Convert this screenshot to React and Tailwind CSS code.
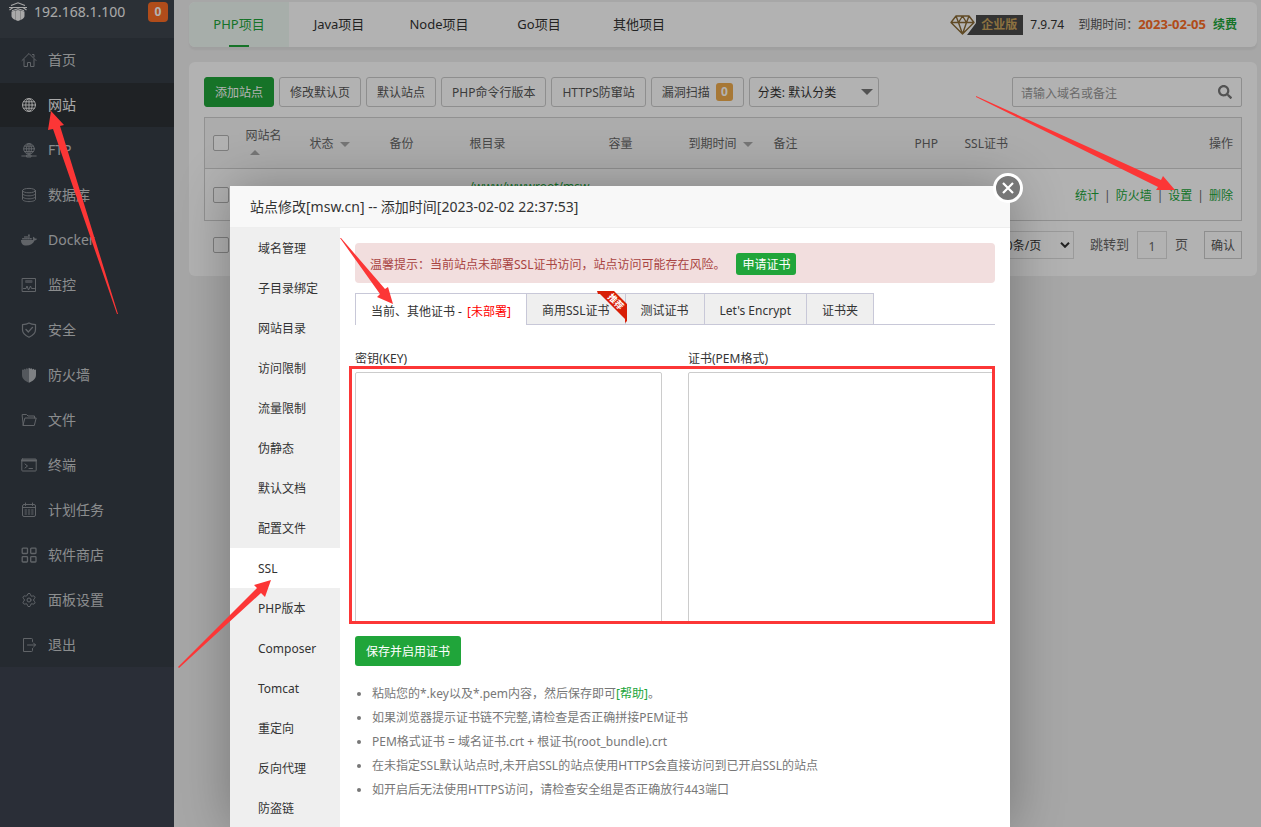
import React from "react";
import { FaDocker, FaSearch } from "react-icons/fa";
import { Settings } from "lucide-react";

const line = { fill: "none", stroke: "currentColor", strokeWidth: 1, strokeLinecap: "round", strokeLinejoin: "round" };

function Svg({ children, ...rest }) {
  return (
    <svg viewBox="0 0 16 16" className="size-4 shrink-0" aria-hidden="true" {...line} {...rest}>
      {children}
    </svg>
  );
}

const icons = {
  home: (
    <Svg>
      <path d="M1 8.5 8 1.5l7 7M3 7.5v7h3.5v-4h3v4H13v-7M11.5 2.5h1.5v2.5" />
    </Svg>
  ),
  globe: (
    <Svg>
      <circle cx="8" cy="8" r="6.5" />
      <ellipse cx="8" cy="8" rx="3.2" ry="6.5" />
      <path d="M8 1.5v13M1.5 8h13M2.5 4.8h11M2.5 11.2h11" />
    </Svg>
  ),
  ftp: (
    <Svg>
      <circle cx="8" cy="6.8" r="5.3" />
      <ellipse cx="8" cy="6.8" rx="2.5" ry="5.3" />
      <path d="M8 1.5v12M2.7 6.8h10.6M3.6 4.2h8.8M3.6 9.5h8.8M.8 14h14.4M6 13h4v2H6z" />
    </Svg>
  ),
  database: (
    <Svg>
      <ellipse cx="8" cy="3.6" rx="6.5" ry="2.2" />
      <path d="M1.5 3.6v8.8c0 1.2 3 2.2 6.5 2.2s6.5-1 6.5-2.2V3.6M1.5 6.6c0 1.2 3 2.2 6.5 2.2s6.5-1 6.5-2.2M1.5 9.6c0 1.2 3 2.2 6.5 2.2s6.5-1 6.5-2.2" />
    </Svg>
  ),
  docker: <FaDocker className="size-4 shrink-0" aria-hidden="true" />,
  monitor: (
    <Svg>
      <path d="M1.5 1.5h13v13h-13zM2.5 11.5H5l1-2.5 1.5 4L9.5 9l1 2.5h3" />
      <path d="M5 3.5h6v2H5z" fill="currentColor" opacity=".6" />
    </Svg>
  ),
  shieldCheck: (
    <Svg strokeWidth="1.2">
      <path d="M8 .9c2 1.3 4 1.6 6.5 1.7v5.2c0 3.5-2.5 5.7-6.5 7.4C4 13.5 1.5 11.3 1.5 7.8V2.6C4 2.5 6 2.2 8 .9z" />
      <path d="m5 7.5 2.4 2.4 4.1-4.5" strokeWidth="1.4" />
    </Svg>
  ),
  firewall: (
    <Svg stroke="none" fill="currentColor">
      <path d="M8 .8v15C3.800 14 1 11.500 1 8V2.500l1.500.6.6-1.300 1.700.7.500-1.200 1.400.4z" opacity=".8" />
      <path d="M8 .8v15c4.200-1.800 7-4.300 7-7.800V2.500l-1.500.6-.6-1.300-1.700.7-.5-1.200-1.400.4z" fill="#b4b8bc" />
    </Svg>
  ),
  folder: (
    <Svg>
      <path d="M2.3 13.5 1.2 4V2.5h4.300L7 4h6.500v2M2.300 13.500h11L15.200 6H4.300z" />
    </Svg>
  ),
  terminal: (
    <Svg>
      <rect x=".8" y="2" width="14.4" height="12" rx=".8" />
      <path d="M1 3.500h14" strokeWidth="2" />
      <path d="m4 7 2.500 2L4 11M8 11.500h3.500" />
    </Svg>
  ),
  calendar: (
    <Svg>
      <rect x="1.5" y="2.5" width="13" height="12" rx="1.5" />
      <path d="M1.500 5.500h13M4.500 1v2.500M11.500 1v2.500M4 8h1.500M7.300 8h1.500M10.600 8h1.500M4 10h1.500M7.300 10h1.500M10.600 10h1.500M4 12h1.500M7.300 12h1.500M10.600 12h1.500" />
    </Svg>
  ),
  apps: (
    <Svg strokeWidth="1.3">
      <rect x="1.2" y="1.2" width="5.3" height="5.3" rx=".8" />
      <rect x="9.7" y="1.2" width="5.3" height="5.3" rx=".8" />
      <rect x="1.2" y="9.7" width="5.3" height="5.3" rx=".8" />
      <rect x="9.7" y="9.7" width="5.3" height="5.3" rx=".8" />
    </Svg>
  ),
  gear: <Settings className="size-4 shrink-0" strokeWidth={1.5} aria-hidden="true" />,
  exit: (
    <Svg>
      <path d="M11.500 4.500v-2a1 1 0 0 0-1-1H2.500v13h8a1 1 0 0 0 1-1v-2M6.500 8H14.500M12.500 6l2 2-2 2" />
    </Svg>
  ),
};

const menu = [
  ["首页", "home"],
  ["网站", "globe"],
  ["FTP", "ftp"],
  ["数据库", "database"],
  ["Docker", "docker"],
  ["监控", "monitor"],
  ["安全", "shieldCheck"],
  ["防火墙", "firewall"],
  ["文件", "folder"],
  ["终端", "terminal"],
  ["计划任务", "calendar"],
  ["软件商店", "apps"],
  ["面板设置", "gear"],
  ["退出", "exit"],
];

function Sidebar() {
  return (
    <aside className="w-[174px] shrink-0 bg-[#3d4350]">
      <div className="flex h-[38px] items-start bg-[#3e454e] pl-2 pr-1.5">
        <svg viewBox="0 0 20 20" className="mt-0.5 size-5 shrink-0 text-[#f2f2f2]" fill="currentColor" aria-hidden="true">
          <path d="M3.500 9.500 10 8l6.500 1.500V14c0 2-3 4-6.500 5-3.500-1-6.500-3-6.500-5z" />
          <path d="M1 5.500h18M3 3.500 10 .8l7 2.700M1.500 8 5 5.500h10L18.500 8M4 8.800l6-2 6 2" fill="none" stroke="currentColor" strokeWidth="1.1" />
          <path d="M7.500 9v9M12.500 9v9" stroke="#999" strokeWidth=".5" />
        </svg>
        <span className="ml-1.5 text-[14px] leading-6 text-[#f2f2f2]">192.168.1.100</span>
        <span className="ml-auto mt-0.5 flex h-5 w-5 items-center justify-center rounded bg-[#fc6d26] text-xs font-bold text-white">0</span>
      </div>
      <nav className="flex flex-col gap-px bg-[#363d46]">
        {menu.map(([label, icon]) => {
          const active = label === "网站";
          return (
            <a
              key={label}
              href="#"
              className={
                "flex h-11 items-center gap-[11px] pb-0.5 pl-[21px] text-[14px] " +
                (active ? "bg-[#2d3236] text-[#f4f4f4]" : "text-[#c8cacc]")
              }
            >
              <span className={"pt-0.5 " + (active ? "text-[#e8e8e8]" : "text-[#8b9096]")}>{icons[icon]}</span>
              {label}
            </a>
          );
        })}
      </nav>
    </aside>
  );
}

function TopBar() {
  const tabs = ["PHP项目", "Java项目", "Node项目", "Go项目", "其他项目"];
  return (
    <header className="flex h-[45px] items-center overflow-hidden rounded-md bg-white shadow-[0_3px_2px_#e4e4e4]">
      <nav className="flex h-full">
        {tabs.map((t, i) => (
          <a
            key={t}
            href="#"
            className={
              "flex h-full w-[100px] flex-col items-center text-[13px] leading-[45px] " +
              (i === 0 ? "bg-[#f0f9f4] text-[#20a53a]" : "text-[#333]")
            }
          >
            {t}
            {i === 0 && <span className="-mt-0.5 h-0.5 w-5 shrink-0 bg-[#20a53a]" />}
          </a>
        ))}
      </nav>
      <div className="ml-auto flex items-center pr-5 text-xs">
        <svg viewBox="0 0 26 20" className="h-5 w-[26px] shrink-0" fill="none" stroke="#8a6a35" strokeWidth="1.4" strokeLinejoin="round" aria-hidden="true">
          <path d="M26 0v20h-9l9-12z" fill="#4a4a4a" stroke="none" />
          <path d="M6 1h13l5 6.500L12.500 19 1 7.500zM1 7.500h23M6 1l2.500 6.500L12.500 19l4-11.500L19 1M12.500 1l-4 6.500M12.500 1l4 6.500" />
        </svg>
        <span className="flex h-5 items-center bg-[#4a4a4a] pl-[5px] pr-1.5 font-bold text-[#c9a25c]">企业版</span>
        <span className="ml-[7px] text-[#333]">7.9.74</span>
        <span className="ml-3.5 text-[#555]">到期时间：</span>
        <span className="text-[13px] font-bold text-[#fc6d26]">2023-02-05</span>
        <a href="#" className="ml-[7px] font-bold text-[#20a53a]">续费</a>
      </div>
    </header>
  );
}

const toolBtn = "flex h-[30px] items-center rounded-[3px] border px-2.5 pt-0.5 text-xs whitespace-nowrap ";
const grayBtn = toolBtn + "border-[#ccc] bg-white text-[#555]";
const box = "block size-4 appearance-none rounded-[2px] border border-[#b4b4b4] bg-white";

function Caret({ up }) {
  return (
    <svg viewBox="0 0 10 5" className="h-[5px] w-2.5" fill="#aaa" aria-hidden="true">
      <path d={up ? "M0 5 5 0l5 5z" : "M0 0h10L5 5z"} />
    </svg>
  );
}

const th = "px-2 pt-0.5 font-normal";

function SiteTable() {
  return (
    <table className="mt-2.5 w-full table-fixed border-collapse border border-[#d0d0d0] text-left text-xs text-[#666]">
      <colgroup>
        <col className="w-[33px]" />
        <col className="w-16" />
        <col className="w-20" />
        <col className="w-20" />
        <col className="w-[139px]" />
        <col className="w-20" />
        <col className="w-[85px]" />
        <col className="w-[141px]" />
        <col className="w-[50px]" />
        <col className="w-20" />
        <col />
      </colgroup>
      <thead>
        <tr className="h-[51px] border-b border-[#d0d0d0] bg-[#f6f6f6]">
          <th className="px-2"><input type="checkbox" aria-label="全选" className={box} /></th>
          <th className={th}>
            网站名
            <span className="flex h-4 items-center pl-1"><Caret up /></span>
          </th>
          <th className={th}><span className="flex items-center gap-1.5">状态<Caret /></span></th>
          <th className={th}>备份</th>
          <th className={th}>根目录</th>
          <th className={th}>容量</th>
          <th className={th}><span className="flex items-center gap-1.5 whitespace-nowrap">到期时间<Caret /></span></th>
          <th className={th}>备注</th>
          <th className={th}>PHP</th>
          <th className={th}>SSL证书</th>
          <th className={th + " text-right"}>操作</th>
        </tr>
      </thead>
      <tbody>
        <tr className="h-[52px]">
          <td className="px-2"><input type="checkbox" aria-label="选择站点" className={box} /></td>
          <td />
          <td />
          <td />
          <td className="px-2 pt-2 align-top leading-5"><a href="#" className="text-[#20a53a]">/www/wwwroot/msw</a></td>
          <td />
          <td />
          <td />
          <td />
          <td />
          <td className="px-2 pt-0.5">
            <span className="flex justify-end gap-[5px] whitespace-nowrap">
              <a href="#" className="text-[#20a53a]">统计</a>|
              <a href="#" className="text-[#20a53a]">防火墙</a>|
              <a href="#" className="text-[#20a53a]">设置</a>|
              <a href="#" className="text-[#20a53a]">删除</a>
            </span>
          </td>
        </tr>
      </tbody>
    </table>
  );
}

function Sites() {
  return (
    <section className="mt-[15px] rounded-md bg-white px-[15px] pb-[17px] pt-[15px]">
      <div className="flex gap-[5px]">
        <button className={toolBtn + "border-[#20a53a] bg-[#20a53a] text-white"}>添加站点</button>
        <button className={grayBtn}>修改默认页</button>
        <button className={grayBtn}>默认站点</button>
        <button className={grayBtn}>PHP命令行版本</button>
        <button className={grayBtn}>HTTPS防窜站</button>
        <button className={grayBtn}>
          漏洞扫描
          <span className="mb-0.5 ml-1.5 flex h-[18px] w-[17px] items-center justify-center rounded-[3px] bg-[#f0ad4e] text-xs font-bold text-white">0</span>
        </button>
        <label className="relative flex">
          <select aria-label="分类" className="h-[30px] w-[130px] appearance-none rounded-[3px] border border-[#ccc] bg-white px-2 pt-0.5 text-xs text-[#333]">
            <option>分类: 默认分类</option>
          </select>
          <svg viewBox="0 0 12 6" className="pointer-events-none absolute right-1.5 top-3 h-1.5 w-3" fill="#777" aria-hidden="true">
            <path d="M0 0h12L6 6z" />
          </svg>
        </label>
        <label className="relative ml-auto flex w-[230px]">
          <input aria-label="搜索" placeholder="请输入域名或备注" className="h-[30px] w-full rounded-[2px] border border-[#ccc] bg-white px-2 pt-0.5 text-xs placeholder:text-[#999]" />
          <FaSearch className="pointer-events-none absolute right-2.5 top-2 size-3.5 text-[#777]" aria-hidden="true" />
        </label>
      </div>
      <SiteTable />
      <div className="mt-2.5 flex h-7 items-center text-[13px] text-[#666]">
        <input type="checkbox" aria-label="选择全部站点" className={box + " ml-[9px]"} />
        <label className="relative ml-auto mr-4 flex">
          <select aria-label="每页条数" className="h-7 w-[84px] appearance-none border border-[#ddd] bg-white px-2 pt-0.5 text-xs text-[#333]">
            <option>10条/页</option>
          </select>
          <svg viewBox="0 0 10 6" className="pointer-events-none absolute right-1 top-[11px] h-1.5 w-2.5" fill="none" stroke="#333" strokeWidth="2" aria-hidden="true">
            <path d="m1 .8 4 4 4-4" />
          </svg>
        </label>
        <label htmlFor="page">跳转到</label>
        <input id="page" defaultValue="1" className="ml-2 mr-2 h-7 w-[30px] border border-[#ddd] bg-white pt-0.5 text-center text-xs" />
        页
        <button className="ml-4 flex h-7 items-center border border-[#ccc] bg-white px-1.5 pt-0.5 text-xs text-[#555]">确认</button>
      </div>
    </section>
  );
}

const sections = [
  "域名管理", "子目录绑定", "网站目录", "访问限制", "流量限制", "伪静态", "默认文档", "配置文件",
  "SSL", "PHP版本", "Composer", "Tomcat", "重定向", "反向代理", "防盗链",
];

const tabBase = "flex h-8 items-center border-[#c8c8d8] px-[15px] pt-1 whitespace-nowrap ";
const tabRest = tabBase + "border-b border-r border-t bg-[#efefef]";

function Dialog() {
  return (
    <div role="dialog" aria-label="站点修改" className="relative flex w-[780px] flex-col bg-white text-xs text-[#333] shadow-[1px_1px_50px_rgba(0,0,0,0.3)]">
      <button aria-label="关闭" className="absolute -right-[13px] -top-[13px] flex size-[30px] items-center justify-center rounded-full border-[3px] border-white bg-[#777]">
        <svg viewBox="0 0 12 12" className="size-3" fill="none" stroke="#fff" strokeWidth="2.2" aria-hidden="true">
          <path d="m1 1 10 10M11 1 1 11" />
        </svg>
      </button>
      <h2 className="h-[42px] shrink-0 border-b border-[#eee] bg-[#f8f8f8] pl-5 text-[14px] leading-[41px]">
        站点修改[msw.cn] -- 添加时间[2023-02-02 22:37:53]
      </h2>
      <div className="flex grow">
        <nav className="w-[110px] shrink-0 bg-[#efefef]">
          {sections.map((s) => (
            <a key={s} href="#" className={"block h-10 pl-7 leading-[42px] " + (s === "SSL" ? "bg-white" : "")}>
              {s}
            </a>
          ))}
        </nav>
        <div className="min-w-0 grow p-[15px]">
          <div className="flex h-10 items-center rounded bg-[#f2dede] px-[15px] text-[#a94442]">
            <span className="pt-1">温馨提示：当前站点未部署SSL证书访问，站点访问可能存在风险。</span>
            <button className="ml-[11px] mt-0.5 h-[22px] rounded-[3px] bg-[#20a53a] px-1.5 pt-0.5 text-white">申请证书</button>
          </div>
          <div className="mt-2.5 flex">
            <button className={tabBase + "border-l border-r border-t"}>
              当前、其他证书 - <span className="ml-0.5 text-[red]">&nbsp;[未部署]</span>
            </button>
            <button className={tabRest + " relative"}>
              商用SSL证书
              <span className="absolute -right-[3px] -top-[3px] block size-8" aria-hidden="true">
                <svg viewBox="0 0 32 32" className="size-8">
                  <path d="M1 0h17l13 13v17l-2 2v-4L4 3H2z" fill="#d81e06" />
                  <text x="20" y="10.5" transform="rotate(45 20 10.5)" textAnchor="middle" dominantBaseline="central" fontSize="9" fontWeight="bold" fill="#fff">推荐</text>
                </svg>
              </span>
            </button>
            <button className={tabRest}>测试证书</button>
            <button className={tabRest}>Let's Encrypt</button>
            <button className={tabRest}>证书夹</button>
            <span className="grow border-b border-[#c8c8d8]" />
          </div>
          <div className="relative mt-6 grid grid-cols-2 gap-x-[26px]">
            <label htmlFor="key" className="leading-5">密钥(KEY)</label>
            <label htmlFor="pem" className="leading-5">证书(PEM格式)</label>
            <textarea id="key" className="mt-[3px] h-[251px] resize-none rounded-[2px] border border-[#ccc] p-2" />
            <textarea id="pem" className="mt-[3px] h-[251px] resize-none rounded-[2px] border border-[#ccc] p-2" />
            <span className="pointer-events-none absolute -bottom-px -left-1.5 right-0 top-[17px] border-[3px] border-[#fc3636]" />
          </div>
          <button className="mt-[13px] flex h-[30px] items-center rounded-[3px] bg-[#20a53a] px-[11px] pt-0.5 text-white">保存并启用证书</button>
          <ul className="mt-4 list-disc pl-[17px] leading-6 text-[#777]">
            <li>粘贴您的*.key以及*.pem内容，然后保存即可<a href="#" className="text-[#20a53a]">[帮助]</a>。</li>
            <li>如果浏览器提示证书链不完整,请检查是否正确拼接PEM证书</li>
            <li>PEM格式证书 = 域名证书.crt + 根证书(root_bundle).crt</li>
            <li>在未指定SSL默认站点时,未开启SSL的站点使用HTTPS会直接访问到已开启SSL的站点</li>
            <li>如开启后无法使用HTTPS访问，请检查安全组是否正确放行443端口</li>
          </ul>
        </div>
      </div>
    </div>
  );
}

function Arrows() {
  return (
    <svg width="1261" height="827" className="pointer-events-none absolute left-0 top-0 max-w-none" fill="#fc3636" aria-hidden="true">
      <path d="M51 111 64 125 60 126 118 314h-1L53 129 48 130z" />
      <path d="M1175 190 1163 176 1161 180 976 96v1L1158 187 1156 190z" />
      <path d="M393 304 388 287 385 289 341 238h-1L380 294 377 297z" />
      <path d="M271 580 265 597 261 593 179 668 178 667 257 588 254 585z" />
    </svg>
  );
}

export default function App() {
  return (
    <div className="relative flex h-screen overflow-hidden bg-[#f0f0f0] font-['Noto_Sans','Noto_Sans_CJK_SC',sans-serif]">
      <Sidebar />
      <main className="min-w-0 grow pl-[15px] pr-1 pt-0.5">
        <TopBar />
        <Sites />
      </main>
      <div className="absolute inset-0 flex justify-center overflow-hidden bg-black/30 pr-[21px] pt-[186px]">
        <Dialog />
      </div>
      <Arrows />
    </div>
  );
}
